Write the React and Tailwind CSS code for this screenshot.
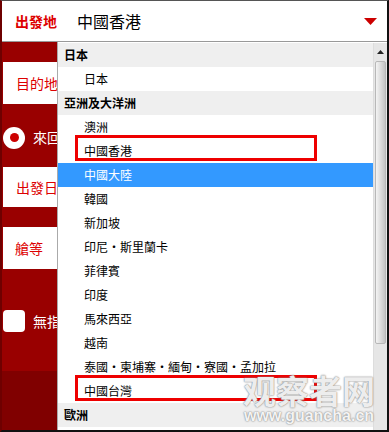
const groups = [
  { title: "日本", items: ["日本"] },
  {
    title: "亞洲及大洋洲",
    items: [
      "澳洲",
      "中國香港",
      "中國大陸",
      "韓國",
      "新加坡",
      "印尼・斯里蘭卡",
      "菲律賓",
      "印度",
      "馬來西亞",
      "越南",
      "泰國・柬埔寨・緬甸・寮國・孟加拉",
      "中國台灣",
    ],
  },
  { title: "歐洲", items: [] },
];

const marked = ["中國香港", "中國台灣"];

const App = () => {
  return (
    <div
      className="relative w-[389px] h-[432px] overflow-hidden bg-white border-l-2 border-l-[#6e0000] border-r-2 border-r-[#111] border-b-2 border-b-[#111] border-t border-t-[#555]"
      style={{ fontFamily: '"Noto Sans CJK TC", "Noto Sans", sans-serif' }}
    >
      {/* 상단 선택 바 */}
      <div className="flex items-center h-[41px] border-b border-[#999] bg-white">
        <span className="ml-[13px] w-[62px] text-[14px] font-bold text-[#dd0000]">出發地</span>
        <span className="text-[16px] text-black">中國香港</span>
        <svg className="ml-auto mr-[10px]" width="13" height="7" viewBox="0 0 13 7">
          <polygon points="0,0 13,0 6.5,7" fill="#cc0000" />
        </svg>
      </div>

      <div className="flex h-[388px]">
        {/* 왼쪽 폼 영역 */}
        <div className="w-[55px] flex flex-col bg-[#990000] shrink-0">
          <div className="h-[20px]" />
          <div className="ml-[1px] h-[42px] bg-white flex items-center pl-[13px] text-[14px] text-[#dd0000] whitespace-nowrap overflow-hidden">目的地</div>
          <div className="h-[63px] flex items-center pl-[1px] pt-[4px]">
            <div className="w-[22px] h-[22px] rounded-full bg-white flex items-center justify-center shrink-0">
              <div className="w-[9px] h-[9px] rounded-full bg-[#cc0000]" />
            </div>
            <span className="ml-[8px] text-[14px] text-white whitespace-nowrap">來回</span>
          </div>
          <div className="ml-[1px] h-[40px] bg-white flex items-center pl-[13px] text-[14px] text-[#dd0000] whitespace-nowrap overflow-hidden">出發日</div>
          <div className="h-[20px]" />
          <div className="ml-[1px] h-[42px] bg-white flex items-center pl-[12px] text-[14px] text-[#dd0000] whitespace-nowrap overflow-hidden">艙等</div>
          <div className="h-[102px] flex items-center pl-[1px] pt-[2px]">
            <div className="w-[22px] h-[22px] rounded-[4px] bg-white shrink-0" />
            <span className="ml-[8px] text-[14px] text-white whitespace-nowrap">無指</span>
          </div>
          <div className="flex-1 bg-[#800000]" />
        </div>

        {/* 드롭다운 목록 */}
        <div className="flex-1 flex border-l border-[#aaa] bg-white pt-[1px]">
          <div className="flex-1 flex flex-col">
            {groups.map((g) => (
              <div key={g.title}>
                <div className="h-[24px] flex items-center pl-[6px] bg-[#efefef] text-[12px] font-bold text-black">{g.title}</div>
                {g.items.map((it) => (
                  <div
                    key={it}
                    className={
                      it === "中國大陸"
                        ? "h-[24px] flex items-center pl-[26px] bg-[#3399ff] text-[12px] text-white"
                        : "relative h-[24px] flex items-center pl-[26px] text-[12px] text-black"
                    }
                  >
                    {marked.includes(it) && (
                      <div className="absolute left-[17px] top-[-4px] w-[242px] h-[26px] border-[3px] border-[#ee0000]" />
                    )}
                    <span className="relative">{it}</span>
                  </div>
                ))}
              </div>
            ))}
          </div>
          {/* 스크롤바 */}
          <div className="w-[14px] flex flex-col bg-[#e6e6e6] border-l border-[#ddd]">
            <div className="h-[18px] flex items-center justify-center">
              <svg width="7" height="4" viewBox="0 0 7 4">
                <polygon points="0,4 7,4 3.5,0" fill="#222" />
              </svg>
            </div>
            <div className="h-[283px] mx-[1px] rounded-[2px] border border-[#b8b8b8] bg-gradient-to-r from-[#f4f4f4] via-[#dcdcdc] to-[#c4c4c4]" />
          </div>
        </div>
      </div>

      {/* 워터마크 */}
      <div className="absolute right-[12px] bottom-[5px] flex flex-col items-center pointer-events-none">
        <span className="text-[33px] leading-[34px] font-bold text-white/85 [text-shadow:0_0_2px_#888,0_0_1px_#888]">观察者网</span>
        <span
          className="text-[16px] leading-[18px] font-bold text-white/90 [text-shadow:0_0_2px_#888,0_0_1px_#888]"
          style={{ fontFamily: '"Liberation Sans", sans-serif' }}
        >
          www.guancha.cn
        </span>
      </div>
    </div>
  );
};

export default App;
